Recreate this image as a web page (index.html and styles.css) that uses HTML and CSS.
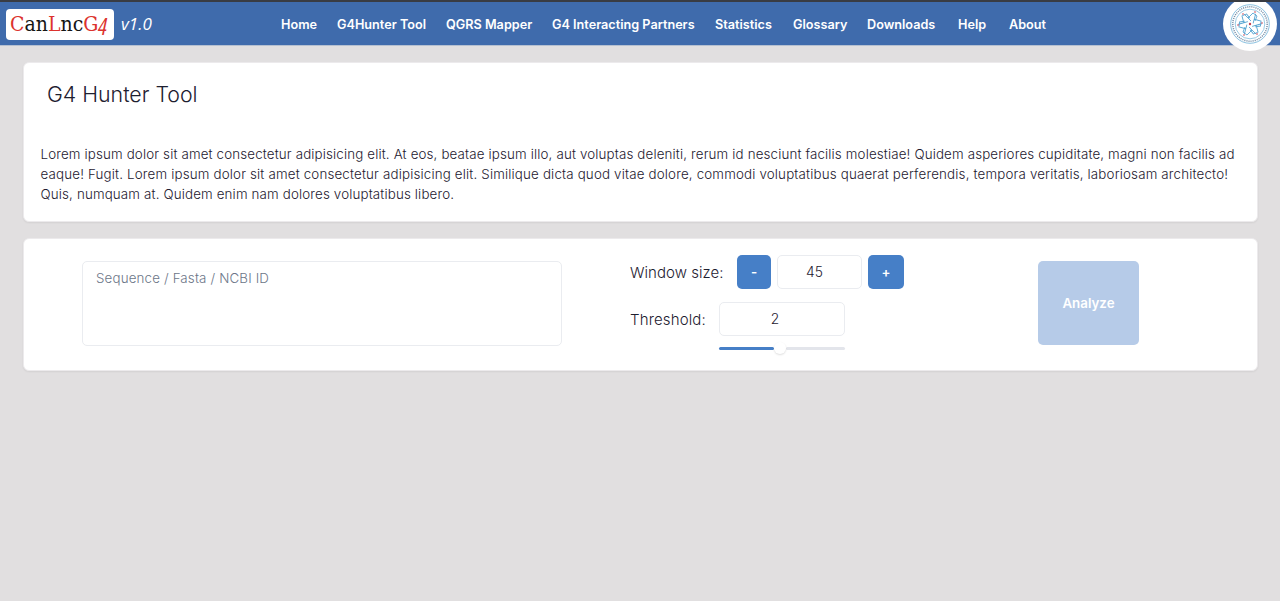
FILE: index.html
```html
<!DOCTYPE html>
<html lang="en">
<head>
<meta charset="utf-8">
<title>CanLncG4 - G4 Hunter Tool</title>
<link rel="stylesheet" href="styles.css">
</head>
<body>
<header class="topbar">
  <a class="brand"><span class="red">C</span>an<span class="red">L</span>nc<span class="red">G<span class="oldstyle">4</span></span></a>
  <span class="version">v1.0</span>
  <nav class="nav">
    <a>Home</a><a>G4Hunter Tool</a><a>QGRS Mapper</a><a>G4 Interacting Partners</a><a>Statistics</a><a>Glossary</a><a>Downloads</a><a>Help</a><a>About</a>
  </nav>
  <div class="seal">
    <svg viewBox="0 0 54 54" width="54" height="54" fill="none" stroke="#58a6d2">
      <circle cx="27" cy="27" r="19.3" stroke-width=".7"/>
      <circle cx="27" cy="27" r="17.2" stroke="#7890a8" stroke-width="1.5" stroke-dasharray="1.1 1"/>
      <circle cx="27" cy="27" r="14.8" stroke-width=".6"/>
      <defs><path id="petal" d="M28 24L25 21L21 17M25 21L30 16L34 19L32 24"/></defs>
      <g stroke-width=".9">
        <use href="#petal"/><use href="#petal" transform="rotate(60 27 27)"/><use href="#petal" transform="rotate(120 27 27)"/><use href="#petal" transform="rotate(180 27 27)"/><use href="#petal" transform="rotate(240 27 27)"/><use href="#petal" transform="rotate(300 27 27)"/>
      </g>
      <g fill="#c63f50" stroke="none"><circle cx="27" cy="27" r="1.2"/><circle cx="20" cy="17" r=".8"/><circle cx="32" cy="15" r=".8"/><circle cx="39" cy="26" r=".8"/><circle cx="34" cy="37" r=".8"/><circle cx="21" cy="38" r=".8"/><circle cx="15" cy="28" r=".8"/></g>
    </svg>
  </div>
</header>
<main>
  <section class="card intro">
    <h1>G4 Hunter Tool</h1>
    <p><span>Lorem ipsum dolor sit amet consectetur adipisicing elit. At eos, beatae ipsum illo, aut voluptas deleniti, rerum id nesciunt facilis molestiae! Quidem asperiores cupiditate, magni non facilis ad</span> <span class="wide">eaque! Fugit. Lorem ipsum dolor sit amet consectetur adipisicing elit. Similique dicta quod vitae dolore, commodi voluptatibus quaerat perferendis, tempora veritatis, laboriosam architecto!</span> <span>Quis, numquam at. Quidem enim nam dolores voluptatibus libero.</span></p>
  </section>
  <section class="card tool">
    <textarea class="sequence" placeholder="Sequence / Fasta / NCBI ID"></textarea>
    <div class="settings">
      <div class="row size-row">
        <label>Window size:</label>
        <button class="step minus">-</button>
        <input class="size" value="45">
        <button class="step plus">+</button>
      </div>
      <div class="row threshold-row">
        <label>Threshold:</label>
        <div class="threshold">
          <input value="2">
          <div class="slider"><div class="filled"></div><div class="thumb"></div><div class="rest"></div></div>
        </div>
      </div>
    </div>
    <button class="analyze">Analyze</button>
  </section>
</main>
</body>
</html>
```
FILE: styles.css
```css
* { box-sizing: border-box; }
body { margin: 0; min-height: 601px; background: #e1dfe0; color: #1e2030; font-family: Inter, sans-serif; }
.topbar { display: flex; height: 46px; border-top: 2px solid #393c43; border-bottom: 1px solid #b5c0d1; background: #3f6bac; padding-left: 6px; }
.brand { width: 108px; height: 31px; margin-top: 7px; padding-left: 4px; border-radius: 4px; background: #fff; color: #151515; font: 21px/30px "DejaVu Serif Condensed", "DejaVu Serif", serif; font-stretch: condensed; letter-spacing: 0; white-space: nowrap; }
.red { color: #dc332e; }
.oldstyle { display: inline-block; font-family: "Open Sans", sans-serif; font-size: 23px; line-height: 20px; font-style: italic; transform: translateY(4px); }
.version { width: 32px; margin: 11px 0 0 7px; color: #fff; font: italic 17px/22px "Open Sans", sans-serif; }
.nav { display: grid; grid-template-columns: 56px 109px 106px 163px 78px 74px 91px 51px 50px; margin: 13px 0 0 128px; color: #fff; font-size: 12.67px; font-weight: 600; line-height: 20px; white-space: nowrap; }
.seal { width: 54px; height: 54px; margin: -5px 3px 0 auto; border-radius: 50%; background: #fff; clip-path: inset(5px 0 0 0); flex: none; }
.seal svg { display: block; }
main { padding: 16px 22px 0 23px; }
.card { border-radius: 6px; background: #fff; border: 1px solid #eceaec; box-shadow: 0 1px 2px #0001; }
.intro { height: 160px; padding: 16px 16px; }
h1 { margin: 0 0 0 7px; font-size: 21.33px; line-height: 30px; font-weight: 300; }
p { margin: 35px 0 0 .5px; font-size: 13.33px; line-height: 20px; font-weight: 350; letter-spacing: .155px; }
p span { display: block; white-space: nowrap; }
.wide { letter-spacing: .174px; }
.tool { display: flex; align-items: flex-start; height: 133px; margin-top: 16px; padding: 16px 118px 0 58px; }
input, textarea { display: block; margin: 0; border: 1px solid #eaecf0; border-radius: 5px; background: #fff; color: #1e2030; font: 300 13.8px Inter, sans-serif; text-align: center; }
.sequence { width: 480px; height: 85px; margin-top: 6px; padding: 7px 13px; font-size: 13.33px; line-height: 19px; letter-spacing: .16px; text-align: left; resize: none; }
.sequence::placeholder { color: #6c7688; opacity: 1; }
.settings { width: 280px; margin-left: 68px; font-size: 15px; font-weight: 300; }
.row { display: flex; }
.size-row label { width: 107px; line-height: 35px; letter-spacing: .04px; }
button { padding: 0; border: 0; border-radius: 5px; background: #467fc7; color: #fff; font: 600 13.33px Inter, sans-serif; }
.step { height: 34px; }
.minus { width: 34px; }
.plus { width: 36px; }
.size { width: 85px; height: 34px; margin: 0 6px; padding: 0 10px 0 0; }
.threshold-row { margin-top: 12px; }
.threshold-row label { width: 89px; line-height: 36px; letter-spacing: .15px; }
.threshold { width: 126px; }
.threshold input { width: 126px; height: 34px; padding: 0 14px 0 0; }
.slider { display: flex; align-items: center; height: 12px; margin-top: 6px; }
.filled { width: 55px; height: 3px; background: #467fc7; border-radius: 2px; }
.thumb { width: 12px; height: 12px; border-radius: 50%; background: #fff; box-shadow: 0 1px 2px #0002; z-index: 1; }
.rest { flex: 1; height: 3px; background: #e3e5eb; border-radius: 2px; }
.analyze { width: 101px; height: 84px; margin: 6px 0 0 auto; background: #b6cbe8; }
```
